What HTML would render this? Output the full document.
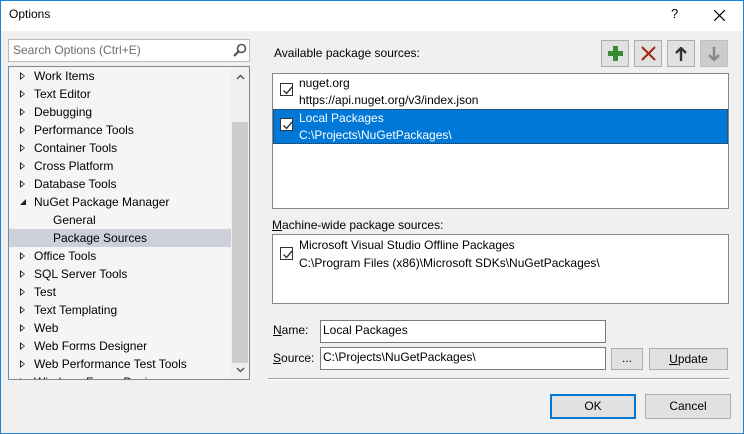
<!DOCTYPE html>
<html><head><style>
*{box-sizing:border-box;margin:0;padding:0}
body{width:744px;height:434px;overflow:hidden;font-family:"Segoe UI","Liberation Sans",sans-serif;font-size:12px;color:#000;background:#f0f0f0;position:relative}
.win{position:absolute;left:0;top:0;width:744px;height:434px;background:#f0f0f0}
.frame{position:absolute;left:0;top:0;width:744px;height:434px;border:1px solid #1883d7;pointer-events:none}
.title{position:absolute;left:0;top:0;width:744px;height:31px;background:#fff}
.a{position:absolute;white-space:nowrap}
.tree{position:absolute;left:8px;top:66px;width:242px;height:314px;border:1px solid #828790;background:#f5f5f5;overflow:hidden}
.row{position:absolute;left:0;height:18px;width:222px;line-height:18px}
.row .t{position:absolute;left:25px}
.tri{position:absolute;left:11px;top:5px;width:0;height:0;border-top:4px solid transparent;border-bottom:4px solid transparent;border-left:5px solid #222}
.tri:after{content:"";position:absolute;left:-4px;top:-2.5px;border-top:2.5px solid transparent;border-bottom:2.5px solid transparent;border-left:3px solid #f5f5f5}
.box{position:absolute;background:#fff;border:1px solid #828790}
.btn{position:absolute;background:#e1e1e1;border:1px solid #adadad;text-align:center}
.cb{position:absolute;width:13px;height:13px;border:1px solid #333;background:#fff}
.cb svg{position:absolute;left:1px;top:1px}
</style></head><body><div class="win">
<div class="title"></div>
<div class="a" style="left:9px;top:7px;font-size:12px">Options</div>
<div class="a" style="left:671px;top:6px;font-size:13px">?</div>
<svg class="a" style="left:714px;top:10px" width="11" height="11"><path d="M0 0L11 11M11 0L0 11" stroke="#000" stroke-width="1.2"/></svg>

<div class="box" style="left:8px;top:39px;width:242px;height:23px;border-color:#bbb"></div>
<div class="a" style="left:13px;top:43px;color:#6d6d6d">Search Options (Ctrl+E)</div>
<svg class="a" style="left:233px;top:43px" width="14" height="14"><circle cx="8.5" cy="5.5" r="4" fill="none" stroke="#555" stroke-width="1.6"/><path d="M5.5 8.5L1 13" stroke="#555" stroke-width="2.2"/></svg>

<div class="tree">
<div class="row" style="top:0"><div class="tri"></div><span class="t">Work Items</span></div>
<div class="row" style="top:18px"><div class="tri"></div><span class="t">Text Editor</span></div>
<div class="row" style="top:36px"><div class="tri"></div><span class="t">Debugging</span></div>
<div class="row" style="top:54px"><div class="tri"></div><span class="t">Performance Tools</span></div>
<div class="row" style="top:72px"><div class="tri"></div><span class="t">Container Tools</span></div>
<div class="row" style="top:90px"><div class="tri"></div><span class="t">Cross Platform</span></div>
<div class="row" style="top:108px"><div class="tri"></div><span class="t">Database Tools</span></div>
<div class="row" style="top:126px"><svg style="position:absolute;left:11px;top:6px" width="7" height="7"><path d="M6 0V6H0Z" fill="#222"/></svg><span class="t">NuGet Package Manager</span></div>
<div class="row" style="top:144px"><span class="t" style="left:44px">General</span></div>
<div class="row" style="top:162px;background:#ccd0db"><span class="t" style="left:44px">Package Sources</span></div>
<div class="row" style="top:180px"><div class="tri"></div><span class="t">Office Tools</span></div>
<div class="row" style="top:198px"><div class="tri"></div><span class="t">SQL Server Tools</span></div>
<div class="row" style="top:216px"><div class="tri"></div><span class="t">Test</span></div>
<div class="row" style="top:234px"><div class="tri"></div><span class="t">Text Templating</span></div>
<div class="row" style="top:252px"><div class="tri"></div><span class="t">Web</span></div>
<div class="row" style="top:270px"><div class="tri"></div><span class="t">Web Forms Designer</span></div>
<div class="row" style="top:288px"><div class="tri"></div><span class="t">Web Performance Test Tools</span></div>
<div class="row" style="top:306px"><div class="tri"></div><span class="t">Windows Forms Designer</span></div>
<div style="position:absolute;left:222px;top:0;width:18px;height:312px;background:#f0f0f0"></div>
<div style="position:absolute;left:223px;top:55px;width:16px;height:241px;background:#cdcdcd"></div>
<svg style="position:absolute;left:227px;top:7px" width="9" height="6"><path d="M1 5L4.5 1.5L8 5" fill="none" stroke="#555" stroke-width="1.5"/></svg>
<svg style="position:absolute;left:227px;top:300px" width="9" height="6"><path d="M1 1L4.5 4.5L8 1" fill="none" stroke="#555" stroke-width="1.5"/></svg>
</div>

<div class="a" style="left:274px;top:46px">Available package sources:</div>
<div class="btn" style="left:601px;top:40px;width:28px;height:27px"><svg style="margin-top:5px" width="15" height="15"><path d="M5 0H10V5H15V10H10V15H5V10H0V5H5Z" fill="#388a34"/></svg></div>
<div class="btn" style="left:634px;top:40px;width:28px;height:27px"><svg style="margin-top:5px" width="15" height="15"><path d="M1 1L14 14M14 1L1 14" stroke="#a1260d" stroke-width="2"/></svg></div>
<div class="btn" style="left:667px;top:40px;width:28px;height:27px"><svg style="margin-top:6px" width="12" height="14"><path d="M6 1V14M1 6L6 1L11 6" fill="none" stroke="#333" stroke-width="2.4"/></svg></div>
<div class="btn" style="left:700px;top:40px;width:28px;height:27px;background:#cccccc;border-color:#bfbfbf"><svg style="margin-top:6px" width="12" height="14"><path d="M6 0V13M1 8L6 13L11 8" fill="none" stroke="#888" stroke-width="2.4"/></svg></div>

<div class="box" style="left:272px;top:73px;width:457px;height:136px"></div>
<div class="cb" style="left:280px;top:83px"><svg width="11" height="11"><path d="M1.5 5.5L4.5 8.5L10 2" fill="none" stroke="#333" stroke-width="1.4"/></svg></div>
<div class="a" style="left:299px;top:76px">nuget.org</div>
<div class="a" style="left:299px;top:93px">https://api.nuget.org/v3/index.json</div>
<div class="a" style="left:273px;top:109px;width:455px;height:35px;background:#0078d7;border:1px dotted #333"></div>
<div class="cb" style="left:280px;top:118px"><svg width="11" height="11"><path d="M1.5 5.5L4.5 8.5L10 2" fill="none" stroke="#333" stroke-width="1.4"/></svg></div>
<div class="a" style="left:299px;top:111px;color:#fff">Local Packages</div>
<div class="a" style="left:299px;top:128px;color:#fff">C:\Projects\NuGetPackages\</div>

<div class="a" style="left:272px;top:218px"><u>M</u>achine-wide package sources:</div>
<div class="box" style="left:272px;top:234px;width:457px;height:70px"></div>
<div class="cb" style="left:280px;top:247px"><svg width="11" height="11"><path d="M1.5 5.5L4.5 8.5L10 2" fill="none" stroke="#333" stroke-width="1.4"/></svg></div>
<div class="a" style="left:299px;top:238px">Microsoft Visual Studio Offline Packages</div>
<div class="a" style="left:299px;top:256px">C:\Program Files (x86)\Microsoft SDKs\NuGetPackages\</div>

<div class="a" style="left:273px;top:323px"><u>N</u>ame:</div>
<div class="box" style="left:320px;top:320px;width:286px;height:23px;border-color:#7a7a7a"></div>
<div class="a" style="left:323px;top:323px">Local Packages</div>
<div class="a" style="left:273px;top:351px"><u>S</u>ource:</div>
<div class="box" style="left:320px;top:347px;width:286px;height:23px;border-color:#7a7a7a"></div>
<div class="a" style="left:323px;top:350px">C:\Projects\NuGetPackages\</div>
<div class="btn" style="left:611px;top:348px;width:32px;height:22px;line-height:19px">...</div>
<div class="btn" style="left:649px;top:348px;width:79px;height:22px;line-height:20px"><u>U</u>pdate</div>
<div style="position:absolute;left:268px;top:378px;width:461px;height:1px;background:#a0a0a0"></div>
<div style="position:absolute;left:268px;top:379px;width:461px;height:1px;background:#fff"></div>

<div class="btn" style="left:550px;top:394px;width:86px;height:25px;border:2px solid #0078d7;line-height:21px">OK</div>
<div class="btn" style="left:645px;top:394px;width:86px;height:25px;line-height:23px">Cancel</div>
</div><div class="frame"></div></body></html>
